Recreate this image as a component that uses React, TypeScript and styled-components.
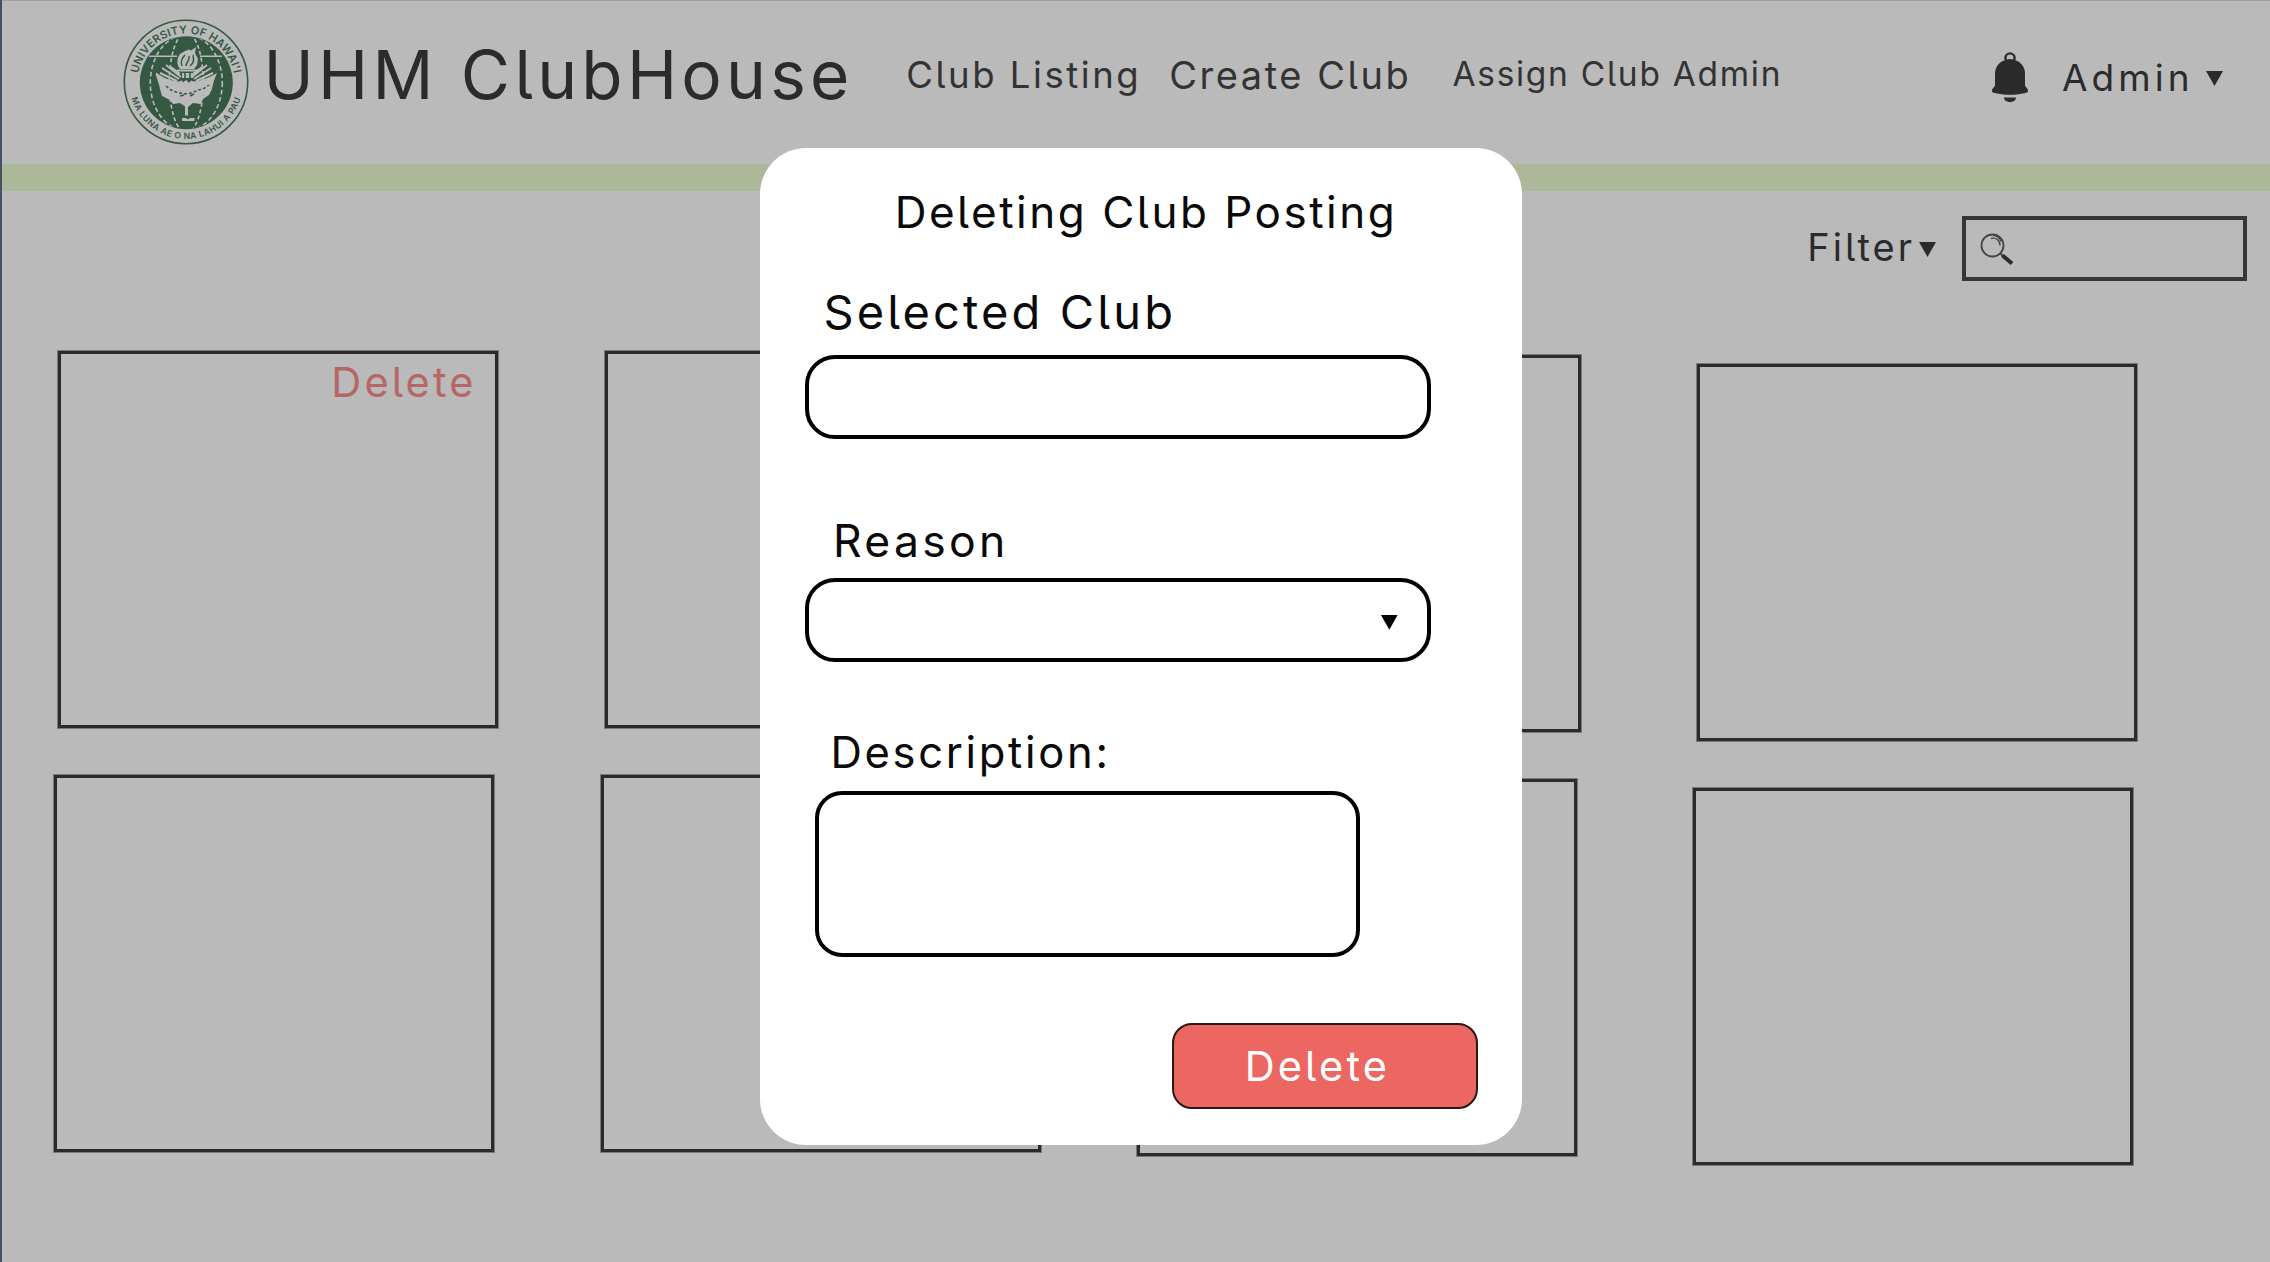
import React from "react";
import styled, { createGlobalStyle } from "styled-components";

const color = {
  page: "#bababa",
  ink: "#2b2b2b",
  bar: "#adb799",
  seal: "#355843",
  faded: "#b66664",
  danger: "#ec6762",
};

const GlobalStyle = createGlobalStyle`
  * { box-sizing: border-box; }
  body { margin: 0; background: ${color.page}; }
`;

const Page = styled.div`
  position: relative;
  width: 2270px;
  height: 1262px;
  overflow: hidden;
  background: ${color.page};
  border-left: 2px solid #46515e;
  box-shadow: inset 0 1px 0 #a0a0a0;
  color: ${color.ink};
  font-family: Inter, "Liberation Sans", sans-serif;
  font-feature-settings: "cv05";
`;

const Label = styled.span<{ $size: number; $track: number }>`
  font-size: ${(p) => p.$size}px;
  font-weight: 400;
  letter-spacing: ${(p) => p.$track}px;
  line-height: 60px;
  white-space: nowrap;
`;

const Header = styled.header`
  display: flex;
  align-items: center;
  height: 149px;
  padding: 0 47px 0 121px;
`;

const Seal = styled.svg`
  width: 126px;
  height: 126px;
  flex: none;
  margin-top: 15px;
`;

const Brand = styled(Label)`
  margin: 0 0 0 14.6px;
`;

const Nav = styled.nav`
  display: flex;
  align-items: center;
  margin-left: 52.6px;
`;

const NavItem = styled(Label)<{ $before?: number; $lift?: number }>`
  margin: 0 0 ${(p) => p.$lift ?? 0}px ${(p) => p.$before ?? 0}px;
  color: #333;
`;

const Account = styled.div`
  display: flex;
  align-items: center;
  margin: 6px 0 0 auto;
`;

const Bell = styled.svg`
  width: 36px;
  height: 51px;
  margin-right: 34px;
`;

const Caret = styled.span<{ $before: number; $black?: boolean }>`
  width: 17px;
  height: 15px;
  margin: ${(p) => (p.$black ? 5 : 2)}px 0 0 ${(p) => p.$before}px;
  background: ${(p) => (p.$black ? "#000" : color.ink)};
  clip-path: polygon(0 0, 100% 0, 50% 100%);
`;

const GreenBar = styled.div`
  height: 27px;
  margin-top: 14.5px;
  background: ${color.bar};
`;

const Toolbar = styled.div`
  display: flex;
  align-items: center;
  justify-content: flex-end;
  height: 65px;
  margin: 25.5px 23px 0 0;
`;

const FilterLabel = styled(Label)`
  margin-top: -4px;
`;

const Search = styled.div`
  display: flex;
  align-items: center;
  width: 285px;
  height: 65px;
  margin-left: 26px;
  padding-left: 14px;
  border: 4px solid #363636;
`;

const Lens = styled.svg`
  width: 34px;
  height: 32px;
`;

const Cards = styled.main`
  margin-top: 68.6px;
`;

const CardRow = styled.div<{ $indent: number }>`
  display: grid;
  grid-template-columns: 547px 536px 556.5px 442px;
  height: 424px;
  padding-left: ${(p) => p.$indent}px;
`;

const Card = styled.section<{ $drop: number }>`
  display: flex;
  justify-content: flex-end;
  align-items: flex-start;
  width: 440px;
  height: 377px;
  margin: ${(p) => p.$drop + 1}px 0 0 1px;
  padding-right: 18px;
  border: 3px solid ${color.ink};
  box-shadow: 0 0 0 1px rgba(43, 43, 43, 0.45);
`;

const CardAction = styled(Label)`
  margin-top: -2px;
  color: ${color.faded};
`;

const Overlay = styled.div`
  position: absolute;
  inset: 0;
  padding: 148.4px 0 0 757.5px;
`;

const Dialog = styled.div`
  display: flex;
  flex-direction: column;
  align-items: flex-start;
  width: 762.5px;
  height: 996.3px;
  padding-top: 34px;
  border-radius: 46px;
  background: #fff;
  color: #0a0a0a;
`;

const DialogText = styled(Label)<{ $top?: number; $left: number }>`
  margin: ${(p) => p.$top ?? 0}px 0 0 ${(p) => p.$left}px;
`;

const Field = styled.div<{ $top: number; $left: number; $w: number; $h: number; $r: number }>`
  display: flex;
  align-items: center;
  justify-content: flex-end;
  width: ${(p) => p.$w}px;
  height: ${(p) => p.$h}px;
  margin: ${(p) => p.$top}px 0 0 ${(p) => p.$left}px;
  padding-right: 29px;
  border: 4px solid #000;
  border-radius: ${(p) => p.$r}px;
`;

const DeleteButton = styled.button`
  display: flex;
  align-items: center;
  justify-content: center;
  width: 306px;
  height: 86px;
  margin: 66px 0 0 412.7px;
  padding: 0 15.7px 0 0;
  border: 2px solid #2a1818;
  border-radius: 20px;
  background: ${color.danger};
  color: #fff;
  font: inherit;
  font-feature-settings: inherit;
`;

function UniversitySeal() {
  return (
    <Seal viewBox="0 0 126 126" fill="none" stroke={color.page}>
      <defs>
        <path id="arcTop" d="M14.5 63a48.5 48.5 0 0 1 97 0" />
        <path id="arcBottom" d="M6 63a57 57 0 0 0 114 0" />
        <clipPath id="globe"><circle cx="63.3" cy="63.7" r="46" /></clipPath>
      </defs>
      <circle cx="63" cy="63" r="61.7" stroke={color.seal} strokeWidth="1.6" />
      <circle cx="63.3" cy="63.7" r="46.5" fill={color.seal} stroke="none" />
      <g fill={color.seal} stroke="none" fontFamily="Inter, sans-serif" fontWeight="600">
        <text fontSize="11" textAnchor="middle" letterSpacing="0.2">
          <textPath href="#arcTop" startOffset="50%">UNIVERSITY OF HAWAI'I</textPath>
        </text>
        <text fontSize="8.5" textAnchor="middle" letterSpacing="0.5">
          <textPath href="#arcBottom" startOffset="50%">MA LUNA AE O NA LAHUI A PAU</textPath>
        </text>
      </g>
      <g clipPath="url(#globe)" strokeWidth="1.6">
        <ellipse cx="63.3" cy="63.7" rx="17" ry="50" strokeDasharray="4 2.6" />
        <ellipse cx="63.3" cy="63.7" rx="36" ry="48" strokeDasharray="4.5 2.8" />
        <path d="M26 37.2h28M77 37.2h22" />
      </g>
      <g strokeWidth="2">
        <path d="M39 49l17 11M43 46l15 12M37 54l17 8M48 48l9 7" />
        <path d="M88 49l-17 11M84 46L69 58M90 54l-17 8M79 48l-9 7" />
      </g>
      <g fill={color.page} stroke="none">
        <path d="M33.5 53.5c6 5.5 14 8 22 9l3.5-1 1 2 3-3 3 3.5 2-2.5 3 1c8-1 16-4 23-8.5-3 6.5-4 11-5 16l-3 6-6 4-2 5-8-1-5 4v8.5h-3V87.5l-5-3.5-7 1-3-4-8-4-2-7c-1-6-3-10-4.5-15z" />
        <path d="M57 50c-4-5-3-11 0-15l5-3 4-1.5 2 1 5-3.5-1 6 3 6-1 6-3 4z" />
        <path d="M54 50.5h20v2H54zM59 54h11v5H59zM59 99h4l2 1.5L67 99h4.5v3H59z" />
      </g>
      <g stroke={color.seal} strokeWidth="1.5">
        <path d="M59 47c-2-5 0-8 3-11M63 47c0-4 4-5 3-10M67 47c4-3 4-6 3-11" />
        <path d="M62 53v9M67 53v7" />
        <path d="M43 67l5 4 5 2 8 2 8-1 6-3 5-1 6-4" strokeDasharray="3 2" />
        <path d="M57 77l4-1M67 77l4-2" />
      </g>
    </Seal>
  );
}

function BellIcon() {
  return (
    <Bell viewBox="0 0 36 51" fill={color.ink}>
      <circle cx="18" cy="6" r="4.6" fill="none" stroke={color.ink} strokeWidth="2.4" />
      <path d="M18 7C8 8 3 14 3 22v11c0 2-3 3-3 6 0 2 3 2 5 2.5 8 1.7 18 1.7 26 0 2-.5 5-.5 5-2.5 0-3-3-4-3-6V22C33 14 28 8 18 7z" />
      <path d="M12 45.5h12c0 6-12 6-12 0z" />
    </Bell>
  );
}

function LensIcon() {
  return (
    <Lens viewBox="0 0 34 32" fill="none" stroke="#444">
      <circle cx="12.5" cy="12.5" r="11" strokeWidth="1.8" />
      <path d="M11 5.5c5-1.500 9 2 9 7" strokeWidth="1.4" />
      <path d="M13 2.5c4 0 7 3 8 6" strokeWidth="1.4" />
      <path d="M20 20l3.5 3.5" strokeWidth="2" />
      <path d="M22.5 22.5l9.5 8" stroke={color.ink} strokeWidth="4" />
    </Lens>
  );
}

const rows = [
  { indent: 54.5, deletable: 0 },
  { indent: 50.6, deletable: -1 },
];
const drops = [0, 0, 4, 13];

export default function App() {
  return (
    <Page>
      <GlobalStyle />
      <Header>
        <UniversitySeal />
        <Brand as="h1" $size={67.5} $track={4.23}>UHM ClubHouse</Brand>
        <Nav>
          <NavItem $size={36.5} $track={2.55}>Club Listing</NavItem>
          <NavItem $size={38} $track={2.55} $before={28}>Create Club</NavItem>
          <NavItem $size={33.5} $track={1.71} $before={41} $lift={2}>Assign Club Admin</NavItem>
        </Nav>
        <Account>
          <BellIcon />
          <Label $size={37} $track={4}>Admin</Label>
          <Caret $before={12.5} />
        </Account>
      </Header>
      <GreenBar />
      <Toolbar>
        <FilterLabel $size={38} $track={3}>Filter</FilterLabel>
        <Caret $before={4} />
        <Search><LensIcon /></Search>
      </Toolbar>
      <Cards>
        {rows.map((row) => (
          <CardRow key={row.indent} $indent={row.indent}>
            {drops.map((drop, i) => (
              <Card key={i} $drop={drop}>
                {i === row.deletable && <CardAction $size={41.5} $track={3.1}>Delete</CardAction>}
              </Card>
            ))}
          </CardRow>
        ))}
      </Cards>
      <Overlay>
        <Dialog role="dialog">
          <DialogText $size={44} $track={2.5} $left={135.2}>Deleting Club Posting</DialogText>
          <DialogText $size={47} $track={3.1} $top={39.6} $left={64}>Selected Club</DialogText>
          <Field $top={13.5} $left={45.8} $w={625.5} $h={84} $r={30} />
          <DialogText $size={44.5} $track={3.3} $top={71.3} $left={73.5}>Reason</DialogText>
          <Field $top={7} $left={45.8} $w={625.5} $h={84} $r={30}><Caret $before={0} $black /></Field>
          <DialogText $size={43.5} $track={2.7} $top={60.2} $left={70.9}>Description:</DialogText>
          <Field $top={8.8} $left={55.6} $w={544.7} $h={166} $r={27} />
          <DeleteButton>
            <Label $size={41.5} $track={3.15}>Delete</Label>
          </DeleteButton>
        </Dialog>
      </Overlay>
    </Page>
  );
}
